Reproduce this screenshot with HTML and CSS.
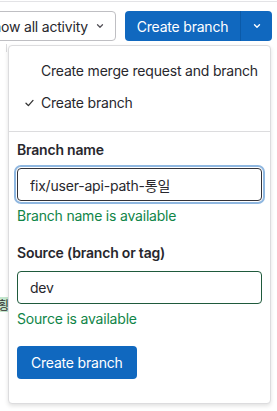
FILE: index.html
```html
<!DOCTYPE html>
<html lang="en">

<head>
    <meta charset="UTF-8">
    <meta name="viewport" content="width=device-width, initial-scale=1.0">
    <title>Create branch</title>
    <link rel="stylesheet" href="styles.css">
</head>

<body>
    <div class="page">
        <div class="toolbar">
            <button class="btn btn-default">
                Show all activity
                <svg class="chevron" width="10" height="10" viewBox="0 0 16 16">
                    <path d="M4 6l4 4 4-4" fill="none" stroke="currentColor" stroke-width="2" stroke-linecap="round" stroke-linejoin="round"/>
                </svg>
            </button>
            <div class="split">
                <button class="btn btn-confirm split-main">Create branch</button>
                <button class="btn btn-confirm split-toggle">
                    <svg width="10" height="10" viewBox="0 0 16 16">
                        <path d="M4 6l4 4 4-4" fill="none" stroke="currentColor" stroke-width="2.2" stroke-linecap="round" stroke-linejoin="round"/>
                    </svg>
                </button>
            </div>
        </div>

        <div class="behind">
            <span class="behind-line"></span>
            <span class="behind-chip">횡</span>
        </div>

        <div class="dropdown">
            <ul class="menu">
                <li class="menu-item">
                    <span class="check"></span>
                    Create merge request and branch
                </li>
                <li class="menu-item">
                    <span class="check">
                        <svg width="9" height="8" viewBox="0 0 9 8">
                            <path d="M1 4.2l2.4 2.4L8 1.4" fill="none" stroke="currentColor" stroke-width="1.3" stroke-linecap="round" stroke-linejoin="round"/>
                        </svg>
                    </span>
                    Create branch
                </li>
            </ul>

            <form class="branch-form">
                <label class="field-label" for="branchName">Branch name</label>
                <input id="branchName" class="field-input is-focused" type="text" value="fix/user-api-path-통일">
                <p class="field-hint">Branch name is available</p>

                <label class="field-label" for="source">Source (branch or tag)</label>
                <input id="source" class="field-input is-valid" type="text" value="dev">
                <p class="field-hint">Source is available</p>

                <button type="button" class="btn btn-confirm submit">Create branch</button>
            </form>
        </div>
    </div>
</body>

</html>
```

FILE: styles.css
```css
* {
    box-sizing: border-box;
    margin: 0;
    padding: 0;
}

body {
    font-family: Inter, "Noto Sans", "Noto Sans CJK KR", sans-serif;
    font-size: 14px;
    letter-spacing: -0.2px;
    color: #28272d;
    background-color: white;
    overflow: hidden;
}

.page {
    position: relative;
    width: 277px;
    height: 411px;
    overflow: hidden;
}

.toolbar {
    display: flex;
    justify-content: flex-end;
    gap: 9px;
    padding: 9px 5px 0 0;
    border-top: 1px solid #e3e3e6;
    margin-top: 1px;
}

.btn {
    display: flex;
    align-items: center;
    justify-content: center;
    height: 30px;
    border-radius: 4px;
    font-family: inherit;
    font-size: 14px;
    letter-spacing: -0.2px;
    white-space: nowrap;
    cursor: pointer;
}

.btn-default {
    flex-shrink: 0;
    padding: 0 10px 0 12px;
    gap: 7px;
    background-color: white;
    color: #28272d;
    border: 1px solid #bfbfc3;
}

.chevron {
    color: #535158;
}

.btn-confirm {
    background-color: #1068bf;
    color: white;
    border: none;
}

.split {
    display: flex;
    flex-shrink: 0;
}

.split-main {
    width: 115px;
    border-radius: 4px 0 0 4px;
    padding-top: 1px;
}

.split-toggle {
    width: 32px;
    border-radius: 0 4px 4px 0;
    border-left: 1px solid #0b5aa8;
}

.behind {
    position: absolute;
    top: 0;
    left: 0;
}

.behind-line {
    position: absolute;
    left: 6px;
    top: 44px;
    width: 1px;
    height: 8px;
    background-color: #dcdcde;
}

.behind-chip {
    position: absolute;
    left: -3px;
    top: 297px;
    padding: 0 1px;
    background-color: #c3e6cd;
    font-family: "Noto Sans CJK KR", sans-serif;
    font-size: 12px;
    line-height: 15px;
    color: #333;
}

.dropdown {
    position: absolute;
    top: 45px;
    left: 8px;
    width: 263px;
    height: 359px;
    background-color: white;
    border: 1px solid #dcdcde;
    border-radius: 4px;
    box-shadow: 0 2px 4px rgba(0, 0, 0, 0.12);
}

.menu {
    list-style: none;
    padding: 9px 0 12px;
    border-bottom: 1px solid #dcdcde;
}

.menu-item {
    display: flex;
    align-items: center;
    height: 32px;
    padding-left: 16px;
    line-height: 20px;
}

.check {
    display: flex;
    width: 16px;
    color: #333;
}

.branch-form {
    display: flex;
    flex-direction: column;
    align-items: flex-start;
    padding: 8px 8px 16px;
}

.field-label {
    font-weight: 600;
    line-height: 20px;
    margin-bottom: 8px;
}

.field-input {
    width: 100%;
    height: 33px;
    padding: 0 12px;
    font-family: Inter, "Noto Sans CJK KR", sans-serif;
    font-size: 14px;
    letter-spacing: -0.2px;
    color: #28272d;
    border: 1px solid #333238;
    border-radius: 4px;
    outline: none;
}

.field-input.is-focused {
    box-shadow: 0 0 0 1px white, 0 0 0 3px #8fb7e0;
}

.field-input.is-valid {
    border-color: #1f5a3c;
}

.field-hint {
    color: #108548;
    line-height: 20px;
    margin: 5px 0 17px;
}

.submit {
    height: 33px;
    padding: 0 14px;
}
```
